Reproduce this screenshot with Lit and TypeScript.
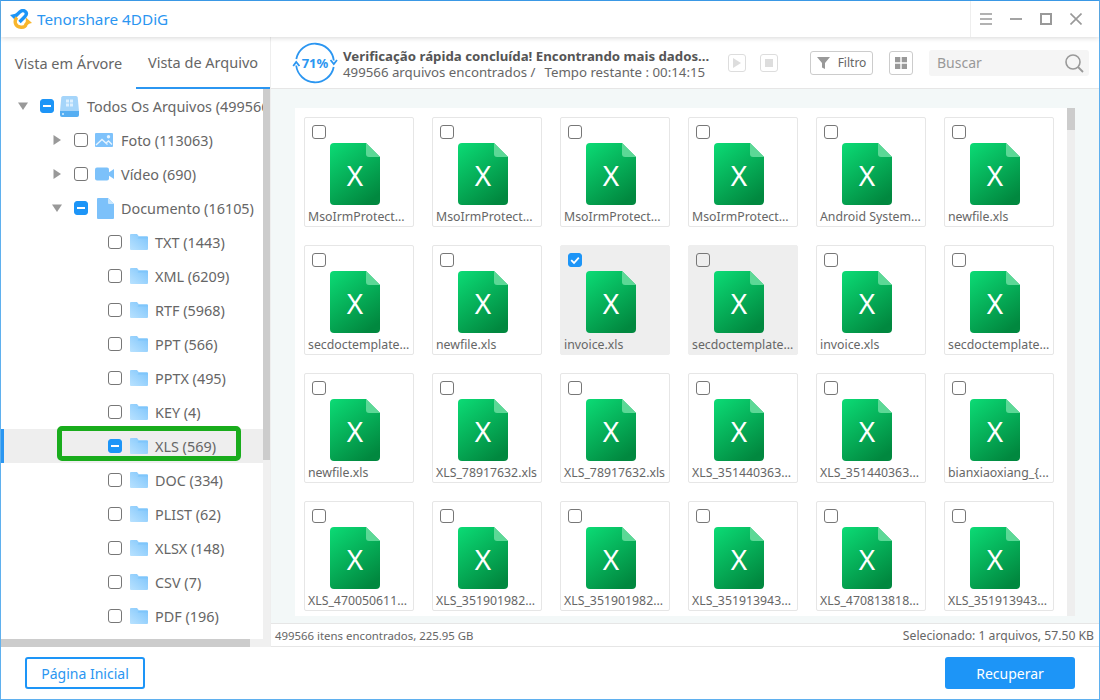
import { LitElement, html, css, svg } from 'lit'
import { customElement } from 'lit/decorators.js'
import { classMap } from 'lit/directives/class-map.js'

type Check = 'off' | 'on' | 'mixed'

const folders = [
  'TXT (1443)', 'XML (6209)', 'RTF (5968)', 'PPT (566)', 'PPTX (495)', 'KEY (4)',
  'XLS (569)', 'DOC (334)', 'PLIST (62)', 'XLSX (148)', 'CSV (7)', 'PDF (196)',
]

const files = [
  'MsoIrmProtect...', 'MsoIrmProtect...', 'MsoIrmProtect...', 'MsoIrmProtect...', 'Android System...', 'newfile.xls',
  'secdoctemplate...', 'newfile.xls', 'invoice.xls', 'secdoctemplate...', 'invoice.xls', 'secdoctemplate...',
  'newfile.xls', 'XLS_78917632.xls', 'XLS_78917632.xls', 'XLS_351440363...', 'XLS_351440363...', 'bianxiaoxiang_{...',
  'XLS_470050611...', 'XLS_351901982...', 'XLS_351901982...', 'XLS_351913943...', 'XLS_470813818...', 'XLS_351913943...',
]

const checkbox = (state: Check) => html`
  <span class=${classMap({ cb: true, filled: state !== 'off' })}>
    ${state === 'on'
      ? html`<svg viewBox="0 0 14 14" width="14" height="14"><path d="M3.2 7.2 6 10l4.8-5.4" fill="none" stroke="#fff" stroke-width="1.8"/></svg>`
      : state === 'mixed'
        ? html`<i class="dash"></i>`
        : ''}
  </span>
`

const folderIcon = html`
  <svg class="ico folder" width="18" height="16" viewBox="0 0 18 16">
    <defs>
      <linearGradient id="fold" x1="1" y1="0" x2="0" y2="1">
        <stop offset="0" stop-color="#7cc4fb" /><stop offset="1" stop-color="#b9e2ff" />
      </linearGradient>
    </defs>
    <path d="M0 1q0-1 1-1h6l2 2.400h8q1 0 1 1V15q0 1-1 1H1q-1 0-1-1z" fill="url(#fold)" />
    <path d="M0 4.500h18V3.400q0-1-1-1H9L7.600 4.500z" fill="#7fc6fb" />
  </svg>
`

const excelIcon = html`
  <div class="xl">
    <svg width="50" height="62" viewBox="0 0 50 62">
      <defs>
        <linearGradient id="xlg" x1="0.1" y1="0" x2="0.7" y2="1">
          <stop offset="0" stop-color="#0bd873" /><stop offset="1" stop-color="#01883f" />
        </linearGradient>
      </defs>
      <path d="M4 0h32l14 14v44q0 4-4 4H4q-4 0-4-4V4q0-4 4-4z" fill="url(#xlg)" />
      <path d="M36 0l14 14H39q-3 0-3-3z" fill="#5cd896" />
    </svg>
    <span class="xl-x">X</span>
  </div>
`

@customElement('app-root')
export class AppRoot extends LitElement {
  static styles = css`
    :host {
      display: block;
      width: 1100px;
      height: 700px;
      font-family: 'Noto Sans', 'Liberation Sans', sans-serif;
      color: #666;
      overflow: hidden;
    }
    * { box-sizing: border-box; }
    .win {
      height: 700px;
      display: flex;
      flex-direction: column;
      border: 1px solid #5fb0ee;
      border-top-color: #3d9ff0;
      background: #fff;
    }
    .title {
      height: 36px;
      flex: none;
      display: flex;
      align-items: center;
      padding-left: 9px;
      box-shadow: 0 1px 5px rgba(0, 0, 0, 0.16);
      position: relative;
      z-index: 2;
    }
    .brand { color: #2b96f1; font-size: 15.3px; margin-left: 5px; }
    .wc {
      margin-left: auto;
      height: 36px;
      width: 129px;
      border-left: 1px solid #eee;
      display: flex;
      align-items: center;
    }
    .wc span { width: 30px; display: flex; justify-content: center; }
    .wc svg { display: block; }
    .body { flex: 1; display: flex; min-height: 0; }

    .side { width: 270px; flex: none; display: flex; flex-direction: column; border-right: 1px solid #eee; }
    .tabs { height: 52px; display: flex; flex: none; font-size: 14.5px; }
    .tab { display: flex; align-items: center; justify-content: center; color: #666; }
    .tab.a { width: 135px; }
    .tab.b { flex: 1; border-bottom: 2px solid #2b96f1; }
    .treewrap { flex: 1; display: flex; min-height: 0; }
    .tree { flex: 1; min-width: 0; overflow: hidden; }
    .vbar { width: 7px; flex: none; background: #f0f0f0; }
    .vbar i { display: block; height: 371px; background: #ccc; }
    .hbar { height: 8px; flex: none; background: #f0f0f0; }
    .hbar i { display: block; width: 249px; height: 8px; background: #ccc; }

    .row {
      height: 34px;
      display: flex;
      align-items: center;
      white-space: nowrap;
      font-size: 14.4px;
      position: relative;
      border-left: 3px solid transparent;
    }
    .row.sel { background: #eee; border-left-color: #2b96f1; }
    .row.d0 { padding-left: 14px; }
    .row.d1 { padding-left: 48px; }
    .row.d2 { padding-left: 104px; }
    .arrow { width: 22px; flex: none; display: flex; }
    .cb {
      width: 14px;
      height: 14px;
      flex: none;
      border: 1px solid #777;
      border-radius: 3px;
      display: inline-flex;
      align-items: center;
      justify-content: center;
      background: #fff;
    }
    .cb.filled { background: #1d95f7; border-color: #1d95f7; }
    .cb svg { display: block; flex: none; }
    .dash { width: 8px; height: 2px; background: #fff; display: block; }
    .ico { flex: none; margin-left: 7px; margin-right: 7px; display: block; }
    .ico.drive { margin-left: 6px; margin-right: 8px; }
    .ico.doc { margin-left: 9px; margin-right: 7px; }
    .ico.folder { margin-left: 8px; }
    .hl {
      position: absolute;
      left: 53px;
      top: -3px;
      width: 184px;
      height: 35px;
      border: 5px solid #19ac1c;
      border-radius: 5px;
    }

    .main { flex: 1; min-width: 0; display: flex; flex-direction: column; }
    .top {
      height: 52px;
      flex: none;
      display: flex;
      align-items: center;
      padding-left: 23px;
      border-bottom: 1px solid #e6e6e6;
    }
    .ring { position: relative; width: 42px; height: 42px; flex: none; }
    .ring svg { display: block; overflow: visible; }
    .ring b {
      position: absolute;
      inset: 0;
      display: flex;
      align-items: center;
      justify-content: center;
      font-size: 13px;
      color: #2b96f1;
    }
    .info {
      margin-left: 7px;
      padding-top: 2px;
      width: 385px;
      font-size: 13.25px;
      line-height: 16px;
      white-space: nowrap;
    }
    .info b { display: block; color: #555; }
    .mini {
      width: 18px;
      height: 18px;
      border: 1px solid #ddd;
      border-radius: 3px;
      display: flex;
      align-items: center;
      justify-content: center;
      margin-right: 14px;
    }
    .btn {
      height: 24px;
      border: 1px solid #ccc;
      border-radius: 3px;
      display: flex;
      align-items: center;
      justify-content: center;
      font-size: 12px;
    }
    .filtro { width: 63px; margin-left: 18px; gap: 8px; }
    .gridbtn { width: 24px; margin-left: 16px; }
    .search {
      width: 160px;
      height: 26px;
      margin-left: 16px;
      background: #f5f5f5;
      border-radius: 3px;
      display: flex;
      align-items: center;
      justify-content: space-between;
      padding: 0 5px 0 8px;
      color: #999;
      font-size: 14px;
    }
    .stage {
      flex: 1;
      min-height: 0;
      background: #f3f8f8;
      padding: 19px 24px 7px 24px;
      display: flex;
    }
    .panel { flex: 1; background: #fff; display: flex; min-width: 0; }
    .grid {
      flex: 1;
      display: grid;
      grid-template-columns: repeat(6, 110px);
      grid-auto-rows: 110px;
      gap: 18px;
      padding: 9px 0 0 9px;
      overflow: hidden;
    }
    .card {
      position: relative;
      border: 1px solid #e6e6e6;
      border-radius: 2px;
      display: flex;
      flex-direction: column;
      align-items: flex-start;
      padding-top: 25px;
      background: #fff;
    }
    .card.sel { background: #eee; border-color: #eee; }
    .card .cb { position: absolute; left: 7px; top: 7px; background: transparent; }
    .card .cb.filled { background: #1d95f7; }
    .xl { position: relative; width: 50px; height: 62px; flex: none; margin-left: 25px; }
    .xl svg { display: block; }
    .xl-x {
      position: absolute;
      left: 0;
      right: 0;
      top: 14px;
      text-align: center;
      font-size: 28px;
      line-height: 36px;
      color: #fff;
    }
    .name {
      align-self: stretch;
      padding-left: 3px;
      margin-top: 2px;
      font-size: 12.3px;
      line-height: 20px;
      white-space: nowrap;
      overflow: hidden;
    }
    .sb { width: 8px; flex: none; background: #eee; }
    .sb i { display: block; height: 22px; background: #ccc; }
    .status {
      height: 24px;
      flex: none;
      display: flex;
      align-items: center;
      justify-content: space-between;
      border-top: 1px solid #e6e6e6;
      border-bottom: 1px solid #e6e6e6;
      padding: 0 5px 0 4px;
      font-size: 11.4px;
    }
    .status .r { font-size: 12.2px; }
    .foot {
      height: 52px;
      flex: none;
      display: flex;
      align-items: center;
      justify-content: space-between;
      padding: 0 24px;
    }
    .home {
      width: 120px;
      height: 32px;
      border: 2px solid #1d95f7;
      border-radius: 3px;
      color: #2b96f1;
      font-size: 14px;
      display: flex;
      align-items: center;
      justify-content: center;
    }
    .go {
      width: 130px;
      height: 32px;
      background: #1d95f7;
      border-radius: 3px;
      color: #fff;
      font-size: 14px;
      display: flex;
      align-items: center;
      justify-content: center;
    }
  `

  private arrow(open: boolean) {
    return html`<span class="arrow">
      <svg width="10" height="10" viewBox="0 0 10 10">
        ${open ? svg`<path d="M0 1.5h10L5 9z" fill="#999"/>` : svg`<path d="M1.5 0 9 5l-7.5 5z" fill="#999"/>`}
      </svg>
    </span>`
  }

  private logo() {
    return html`<svg width="22" height="20" viewBox="0 0 22 20">
      <path d="M4 8.500 10 2.800q3-2.300 5.300-.3t-.3 5L9.500 13" fill="none" stroke="#1d95f7" stroke-width="3.400" />
      <path d="M0 6l6.500-1.500L6 12z" fill="#1d95f7" />
      <path d="M7 8.500Q4.500 11 5.500 14.500T11 18.200t5-3l3-3" fill="none" stroke="#f8b62d" stroke-width="3.400" />
      <path d="M22 14l-6.500 1.500.5-7z" fill="#f8b62d" />
    </svg>`
  }

  private driveIcon() {
    return html`<svg class="ico drive" width="19" height="21" viewBox="0 0 19 21">
      <path d="M3 0h13q1.500 0 1.700 1.500L19 15H0L1.300 1.500Q1.500 0 3 0z" fill="#a5d5fa" />
      <path d="M0 15h19v4q0 2-2 2H2q-2 0-2-2z" fill="#55aef2" />
      <path d="M6 3.500h3v3H6zM10 3.500h3v3h-3zM6 7.500h3v3H6zM10 7.500h3v3h-3z" fill="#dcf0ff" />
      <circle cx="3" cy="18" r="1" fill="#d6eeff" />
    </svg>`
  }

  private photoIcon() {
    return html`<svg class="ico" width="19" height="16" viewBox="0 0 19 16">
      <rect y="1" width="18" height="14" rx="1" fill="#7ec2fb" />
      <path d="M1 13 7 7.500l5.500 5M11 11l2.500-2 3.500 3.500" fill="none" stroke="#e8f5ff" stroke-width="1.400" />
      <circle cx="13.500" cy="4.800" r="1.700" fill="#e8f5ff" />
    </svg>`
  }

  private videoIcon() {
    return html`<svg class="ico" width="19" height="16" viewBox="0 0 19 16">
      <rect y="1.500" width="14" height="13" rx="2" fill="#7cc1fa" />
      <path d="M13 7l6-4v10l-6-4z" fill="#7cc1fa" />
    </svg>`
  }

  private docIcon() {
    return html`<svg class="ico doc" width="17" height="21" viewBox="0 0 17 21">
      <path d="M1 0h10l6 6v14q0 1-1 1H1q-1 0-1-1V1q0-1 1-1z" fill="#7cc1fa" />
      <path d="M11 0l6 6h-5q-1 0-1-1z" fill="#c9e7fe" />
    </svg>`
  }

  private ring() {
    return html`<div class="ring">
      <svg width="42" height="42" viewBox="0 0 42 42">
        <path d="M2.300 17A19 19 0 0 1 39.800 18.500" fill="none" stroke="#2b96f1" stroke-width="1.800" />
        <path d="M39.700 25A19 19 0 0 1 2.200 23.500" fill="none" stroke="#2b96f1" stroke-width="1.800" />
        <path d="M36.500 18l3.300 4 3.200-4M-.800 24l3 -4 3.300 4" fill="none" stroke="#2b96f1" stroke-width="1.800" />
      </svg>
      <b>71%</b>
    </div>`
  }

  render() {
    return html`
      <div class="win">
        <div class="title">
          ${this.logo()}
          <span class="brand">Tenorshare 4DDiG</span>
          <div class="wc">
            <span><svg width="12" height="12" viewBox="0 0 12 12"><path d="M0 1h12M0 6h12M0 11h12" stroke="#999" stroke-width="1.600" /></svg></span>
            <span><svg width="12" height="12" viewBox="0 0 12 12"><path d="M0 6h12" stroke="#999" stroke-width="1.800" /></svg></span>
            <span><svg width="12" height="12" viewBox="0 0 12 12"><rect x="1" y="1" width="10" height="10" fill="none" stroke="#999" stroke-width="2" /></svg></span>
            <span><svg width="12" height="12" viewBox="0 0 12 12"><path d="M.5.500l11 11M11.500.500l-11 11" stroke="#999" stroke-width="1.600" /></svg></span>
          </div>
        </div>
        <div class="body">
          <div class="side">
            <div class="tabs">
              <div class="tab a">Vista em Árvore</div>
              <div class="tab b">Vista de Arquivo</div>
            </div>
            <div class="treewrap">
              <div class="tree">
                <div class="row d0">${this.arrow(true)}${checkbox('mixed')}${this.driveIcon()}Todos Os Arquivos (499566)</div>
                <div class="row d1">${this.arrow(false)}${checkbox('off')}${this.photoIcon()}Foto (113063)</div>
                <div class="row d1">${this.arrow(false)}${checkbox('off')}${this.videoIcon()}Vídeo (690)</div>
                <div class="row d1">${this.arrow(true)}${checkbox('mixed')}${this.docIcon()}Documento (16105)</div>
                ${folders.map(
                  f => html`<div class=${classMap({ row: true, d2: true, sel: f.startsWith('XLS (') })}>
                    ${checkbox(f.startsWith('XLS (') ? 'mixed' : 'off')}${folderIcon}${f}
                    ${f.startsWith('XLS (') ? html`<div class="hl"></div>` : ''}
                  </div>`
                )}
              </div>
              <div class="vbar"><i></i></div>
            </div>
            <div class="hbar"><i></i></div>
          </div>
          <div class="main">
            <div class="top">
              ${this.ring()}
              <div class="info">
                <b>Verificação rápida concluída! Encontrando mais dados...</b>
                499566 arquivos encontrados /&nbsp;&thinsp; Tempo restante : 00:14:15
              </div>
              <div class="mini"><svg width="8" height="10" viewBox="0 0 8 10"><path d="M0 0l8 5-8 5z" fill="#ddd" /></svg></div>
              <div class="mini"><svg width="8" height="8" viewBox="0 0 8 8"><rect width="8" height="8" fill="#ddd" /></svg></div>
              <div class="btn filtro">
                <svg width="13" height="12" viewBox="0 0 13 12"><path d="M0 0h13L8 6v6L5 10.500V6z" fill="#999" /></svg>
                Filtro
              </div>
              <div class="btn gridbtn">
                <svg width="12" height="12" viewBox="0 0 12 12"><path d="M0 0h5.300v5.300H0zM6.700 0H12v5.300H6.700zM0 6.700h5.300V12H0zM6.700 6.700H12V12H6.700z" fill="#999" /></svg>
              </div>
              <div class="search">
                Buscar
                <svg width="20" height="20" viewBox="0 0 20 20"><circle cx="9" cy="9" r="7" fill="none" stroke="#999" stroke-width="1.600" /><path d="M14 14l5 5" stroke="#999" stroke-width="1.800" /></svg>
              </div>
            </div>
            <div class="stage">
              <div class="panel">
                <div class="grid">
                  ${files.map(
                    (name, i) => html`<div class=${classMap({ card: true, sel: i === 8 || i === 9 })}>
                      ${checkbox(i === 8 ? 'on' : 'off')}
                      ${excelIcon}
                      <div class="name">${name}</div>
                    </div>`
                  )}
                </div>
                <div class="sb"><i></i></div>
              </div>
            </div>
            <div class="status">
              <span>499566 itens encontrados, 225.95 GB</span>
              <span class="r">Selecionado: 1 arquivos, 57.50 KB</span>
            </div>
          </div>
        </div>
        <div class="foot">
          <div class="home">Página Inicial</div>
          <div class="go">Recuperar</div>
        </div>
      </div>
    `
  }
}
